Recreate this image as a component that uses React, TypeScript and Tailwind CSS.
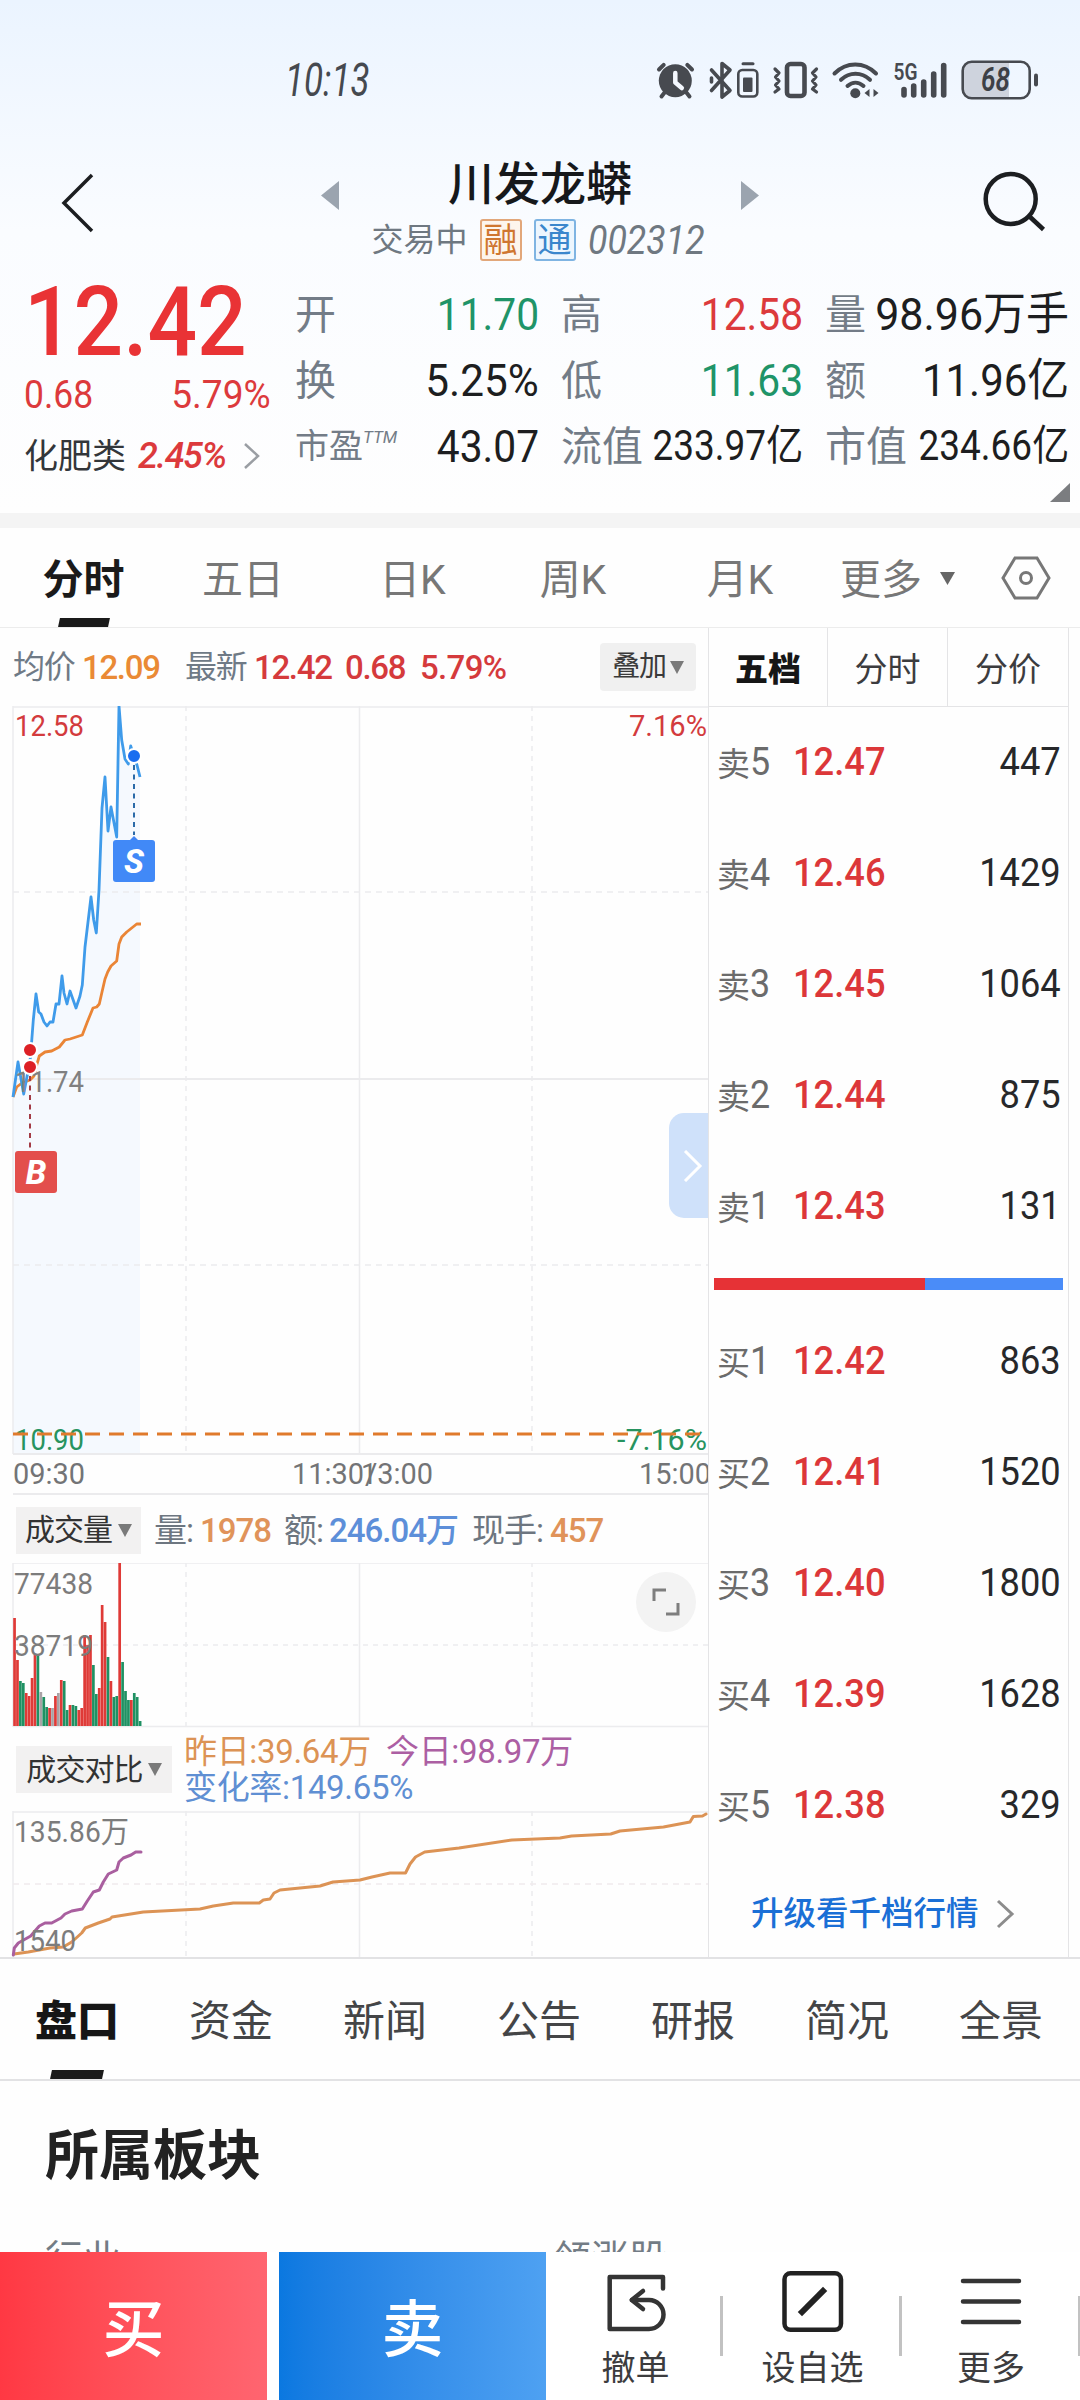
import { useState } from "react";

const FONT = "font-['Roboto','Noto_Sans_CJK_SC',sans-serif]";

const PERIODS = [
  { label: "分时", box: "w-[167px]" },
  { label: "五日", box: "w-[152px]" },
  { label: "日K", box: "w-[187px]" },
  { label: "周K", box: "w-[134px]" },
  { label: "月K", box: "w-[200px]" },
];

const STATS = [
  [
    { label: "开", value: "11.70", style: "text-[45px] scale-x-[0.905] text-[#1f9468]" },
    { label: "高", value: "12.58", style: "text-[45px] scale-x-[0.905] text-[#dc3a3c]" },
    { label: "量", value: "98.96万手", style: "text-[45px] scale-x-[0.955] text-[#1d1e20]" },
  ],
  [
    { label: "换", value: "5.25%", style: "text-[45px] scale-x-[0.94] text-[#1d1e20]" },
    { label: "低", value: "11.63", style: "text-[45px] scale-x-[0.905] text-[#1f9468]" },
    { label: "额", value: "11.96亿", style: "text-[45px] scale-x-[0.93] text-[#1d1e20]" },
  ],
  [
    { label: "市盈", value: "43.07", style: "text-[45px] scale-x-[0.905] text-[#1d1e20]" },
    { label: "流值", value: "233.97亿", style: "text-[42px] scale-x-[0.88] text-[#1d1e20]" },
    { label: "市值", value: "234.66亿", style: "text-[42px] scale-x-[0.88] text-[#1d1e20]" },
  ],
];

const SELLS = [
  ["卖", "5", "12.47", "447"],
  ["卖", "4", "12.46", "1429"],
  ["卖", "3", "12.45", "1064"],
  ["卖", "2", "12.44", "875"],
  ["卖", "1", "12.43", "131"],
];

const BUYS = [
  ["买", "1", "12.42", "863"],
  ["买", "2", "12.41", "1520"],
  ["买", "3", "12.40", "1800"],
  ["买", "4", "12.39", "1628"],
  ["买", "5", "12.38", "329"],
];

const DETAIL_TABS = ["盘口", "资金", "新闻", "公告", "研报", "简况", "全景"];

const PRICE =
  "13,1097 18,1062 23.7,1094 27.5,1074 30.5,1057 31.7,1041 33.3,1020 36,994 38.7,1012 41,1014 44,1022 47,1026 50,1022 53,1022 56,1004 59,1004 62,976 64,993 67,1004 70,991 76,1008 80,996 82.3,985 85,947 91,897 93.7,920 96.3,933 99,890 102,808 105,777 108,831 111,807 116.7,837 119,706 121.7,740 125,759 128.3,764 130.7,746 133.7,756 137,765 140,777";

const AVERAGE =
  "13,1097 16.7,1087 22,1083 30,1080 34,1076 37.3,1063 39.3,1056 45,1052 51.7,1051 59.3,1047 65,1040 70,1039 82.3,1035 87.3,1022 93,1008 96.7,1007 99.3,1004 102,992 105,979 107.7,972 111,966 116.7,961 119,944 121.7,937 126.7,932 136.7,924 141,924";

const TODAY =
  "13.3,1955 14.3,1948 18.3,1943 30.7,1936 35,1931 39.3,1926 45,1923 51.7,1923 61,1918 65,1914 71.7,1911 82.3,1909 87.3,1901 93.3,1892 99.3,1890 103.3,1882 108.3,1874 116.7,1870 119,1862 123.3,1858 131,1855 135.7,1852 141,1852";

const YESTERDAY =
  "14,1954 28.3,1952 50,1948 63.3,1947 71.7,1942 81.7,1933 85.3,1928 98.3,1923 110,1919 112,1917 143.3,1912 200,1909 213.3,1906 233.3,1903 259.3,1903 263.3,1900 270,1899 274,1893 280,1890 320,1886 333,1882 360,1880 372,1877 390,1873 405.5,1873 410,1864 415.5,1857 424.7,1852 459,1848 512,1840 560,1838 571.6,1836 610.7,1834 620,1831 663.5,1827 690,1822 693.3,1816.5 702.5,1816 706,1814";

// r = up, g = down, n = flat
const VOLUMES: [string, number][] = [
  ["r", 108], ["r", 66], ["g", 45], ["g", 43], ["r", 33], ["r", 30], ["r", 48], ["r", 71],
  ["g", 71], ["n", 34], ["g", 29], ["g", 19], ["r", 18], ["n", 18], ["r", 30], ["n", 33],
  ["r", 46], ["g", 45], ["g", 16], ["r", 21], ["g", 21], ["g", 20], ["r", 16], ["r", 18],
  ["r", 91], ["r", 81], ["r", 91], ["g", 61], ["g", 32], ["r", 38], ["r", 121], ["r", 104],
  ["g", 69], ["r", 45], ["g", 29], ["g", 30], ["r", 163], ["g", 64], ["g", 35], ["g", 26],
  ["r", 26], ["g", 33], ["g", 29], ["g", 5],
];

const BAR_COLORS: Record<string, string> = { r: "#df3a37", g: "#1f9163", n: "#a9a3a6" };

function StatusBar() {
  return (
    <div className="h-[160px] flex items-center justify-between pl-[285px] pr-[38px]">
      <span className="text-[46px] leading-none italic text-[#45494f] origin-left scale-x-[0.76]">10:13</span>
      <svg width="390" height="50" viewBox="652 55 390 50" fill="none" stroke="#474a50" strokeLinecap="round" strokeLinejoin="round">
        <circle cx="675.3" cy="80.7" r="16.5" fill="#474a50" stroke="none" />
        <path d="M659 69.5l4.7-4.7M692 69.5l-4.7-4.7M665 92l-3.5 4.5M686 92l3.5 4.5" strokeWidth="4" />
        <path d="M675.3 73v9.5l6.5 5.5" stroke="#f4f8fe" strokeWidth="4.5" />
        <path d="M711.5 70l18.5 20.5-8 6.5V63.5l8 6.5-18.5 20.5M711.5 78v4" strokeWidth="3.6" />
        <rect x="738.3" y="70" width="19" height="26.5" rx="4" strokeWidth="2.6" />
        <path d="M743 63.8h10" strokeWidth="3" />
        <rect x="743" y="77.5" width="9.5" height="14.5" rx="1" fill="#474a50" stroke="none" />
        <rect x="787" y="64" width="17.5" height="32" rx="3.5" strokeWidth="4.6" />
        <path d="M775 69l4 4-3.5 4 3.5 4-3.500 4 3.500 4-4 3M816.500 69l-4 4 3.500 4-3.500 4 3.500 4-3.500 4 4 3" strokeWidth="3.200" />
        <path d="M834.5 73.5c12-12 29.5-12 41.5 0M841 79.8c8.5-8 20.5-8 29 0M847.5 86c5-4.5 11-4.5 16 0" strokeWidth="4" />
        <circle cx="855.3" cy="93.3" r="5" fill="#474a50" stroke="none" />
        <path d="M869.500 89v8l-5-4zM873.500 89v8l5-4z" fill="#474a50" stroke="none" />
        <text x="893.5" y="80" fontSize="24" fontWeight="600" textLength="24" lengthAdjust="spacingAndGlyphs" fill="#474a50" stroke="none">5G</text>
        <path d="M904 89.5V95M913.7 86v9M923.7 82v13M933.7 74v21M943.7 65.5V95" strokeWidth="5.6" />
        <path d="M971 62h38v36h-38q-8-1-8-9V71q0-8 8-9z" fill="#ced3dd" stroke="none" />
        <rect x="962.7" y="61.7" width="67" height="36.6" rx="9" strokeWidth="2.6" />
        <path d="M1036 75.5v9" strokeWidth="4" />
        <text x="981" y="91" fontSize="34" fontWeight="600" fontStyle="italic" textLength="29" lengthAdjust="spacingAndGlyphs" fill="#3d4046" stroke="none">68</text>
      </svg>
    </div>
  );
}

function Header() {
  return (
    <div className="h-[100px] flex items-start">
      <svg className="ml-[60px] mt-[13px]" width="36" height="60" viewBox="0 0 36 60" fill="none" stroke="#1c1e21" strokeWidth="3.5">
        <path d="M32 2L4 30l28 28" />
      </svg>
      <svg className="ml-[225px] mt-[21px]" width="18" height="29" viewBox="0 0 18 29">
        <path d="M18 0v29L0 14.5z" fill="#9ba4af" />
      </svg>
      <div className="w-[402px] flex flex-col items-center">
        <div className="h-[48px] flex items-center text-[46px] leading-none font-medium text-[#16181b]">川发龙蟒</div>
        <div className="h-[64px] flex items-center text-[32px] leading-none text-[#6f7881]">
          <span>交易中</span>
          <span className="ml-[12px] size-[42px] flex items-center justify-center rounded-[3px] border-2 border-[#e2a77a] bg-[#fdf5ed] text-[34px] text-[#cf7630]">融</span>
          <span className="ml-[12px] size-[42px] flex items-center justify-center rounded-[3px] border-2 border-[#7fb4e2] bg-[#edf6fe] text-[34px] text-[#3a86cc]">通</span>
          <span className="ml-[12px] w-[121px] flex">
            <span className="text-[41px] italic font-normal origin-left scale-x-[0.87]">002312</span>
          </span>
        </div>
      </div>
      <svg className="mt-[21px]" width="18" height="29" viewBox="0 0 18 29">
        <path d="M0 0v29l18-14.5z" fill="#9ba4af" />
      </svg>
      <svg className="ml-[223px] mt-[10px]" width="66" height="64" viewBox="982 170 66 64" fill="none" stroke="#1c1e21" strokeWidth="4.5">
        <circle cx="1010.7" cy="199" r="25" />
        <path d="M1029 216l14.5 13.5" />
      </svg>
    </div>
  );
}

function Quote() {
  return (
    <div className="h-[253px] flex">
      <div className="w-[295px] shrink-0 flex flex-col pl-[24px] text-[#dc3a3c]">
        <div className="mt-[12px] h-[100px] flex items-center leading-none text-[#e93335]">
          <span className="text-[97px] font-medium origin-left scale-x-[0.9]">12.42</span>
        </div>
        <div className="h-[46px] w-[247px] flex items-center justify-between text-[39px] leading-none">
          <span className="origin-left scale-x-[0.91]">0.68</span>
          <span className="origin-right scale-x-[0.95]">5.79%</span>
        </div>
        <div className="h-[76px] flex items-center text-[34px] leading-none">
          <span className="text-[#33363a]">化肥类</span>
          <span className="ml-[12px] text-[36px] italic font-medium tracking-[-0.04em]">2.45%</span>
          <svg className="ml-[17px]" width="18" height="26" viewBox="0 0 18 26" fill="none" stroke="#9a9ea3" strokeWidth="2.5">
            <path d="M2 1l13 12L2 25" />
          </svg>
        </div>
      </div>
      <div className="w-[775px] pt-[21px]">
        {STATS.map((row, i) => (
          <div key={i} className="h-[66px] grid grid-cols-[244px_242px_244px] gap-[22px]">
            {row.map((s) => (
              <div key={s.label} className="flex items-center whitespace-nowrap leading-none">
                <span className={s.label === "市盈" ? "flex text-[34px] text-[#737c87]" : "pt-[3px] text-[41px] text-[#737c87]"}>
                  {s.label}
                  {s.label === "市盈" && <span className="text-[17px] italic">TTM</span>}
                </span>
                <div className="flex-1 min-w-0 flex justify-end">
                  <span className={`origin-right ${s.style}`}>{s.value}</span>
                </div>
              </div>
            ))}
          </div>
        ))}
        <svg className="ml-auto mt-[4px]" width="20" height="19" viewBox="0 0 20 19">
          <path d="M20 0v19H0z" fill="#7b7d80" />
        </svg>
      </div>
    </div>
  );
}

function PeriodTabs({ active, onChange }: { active: string; onChange: (v: string) => void }) {
  return (
    <div className="h-[100px] shrink-0 flex border-b border-[#ececec] text-[41px] leading-none text-[#777]">
      {PERIODS.map((p) => (
        <button key={p.label} onClick={() => onChange(p.label)} className={`${p.box} shrink-0 flex flex-col items-center`}>
          <span className={active === p.label ? "h-[90px] pt-[14px] flex items-center font-bold text-[#1a1a1a]" : "h-[90px] pt-[14px] flex items-center"}>
            {p.label}
          </span>
          {active === p.label && <i className="h-[9px] w-[50px] bg-[#1a1a1a] -skew-x-12" />}
        </button>
      ))}
      <button className="h-[99px] pt-[5px] flex items-center">
        更多
        <svg className="ml-[18px] -mt-[4px]" width="15" height="13" viewBox="0 0 15 13">
          <path d="M0 0h15L7.5 13z" fill="#666" />
        </svg>
      </button>
      <svg className="ml-[46px] mt-[28px]" width="50" height="44" viewBox="0 0 50 44" fill="none" stroke="#777" strokeWidth="3">
        <path d="M14 2h22l12 20-12 20H14L2 22z" />
        <circle cx="25" cy="22" r="5.5" />
      </svg>
    </div>
  );
}

function Arrow() {
  return (
    <svg width="14" height="13" viewBox="0 0 14 13">
      <path d="M0 0h14L7 13z" fill="#7a7a7a" />
    </svg>
  );
}

function Grid({ top, bottom }: { top: number; bottom: number }) {
  return (
    <g fill="none" stroke="#ececee" strokeWidth="1.5">
      <path d={`M13 ${top + 1}H708M13 ${top}V${bottom}M359.5 ${top}V${bottom}`} />
      <path d={`M186 ${top}V${bottom}M532 ${top}V${bottom}`} strokeDasharray="5 5" />
    </g>
  );
}

function PriceChart() {
  return (
    <div className="relative h-[789px]">
      <svg width="708" height="789" viewBox="0 706 708 789">
        <polygon points={`${PRICE} 140,1453 13,1453`} fill="#f5f9fe" />
        <Grid top={706} bottom={1454} />
        <path d="M13 1079H708M13 1454H708M13 1494H708" stroke="#ebebed" strokeWidth="2" />
        <path d="M13 892H708M13 1265H708" stroke="#ececee" strokeWidth="1.5" strokeDasharray="6 5" />
        <polyline points={AVERAGE} fill="none" stroke="#ea8536" strokeWidth="2.8" strokeLinejoin="round" />
        <polyline points={PRICE} fill="none" stroke="#3f9bea" strokeWidth="2.8" strokeLinejoin="round" />
        <g fontSize="30">
          <text x="15" y="736" fill="#d33b3d" textLength="69" lengthAdjust="spacingAndGlyphs">12.58</text>
          <text x="629" y="736" fill="#d33b3d" textLength="78" lengthAdjust="spacingAndGlyphs">7.16%</text>
          <text x="15" y="1092" fill="#808080" textLength="69" lengthAdjust="spacingAndGlyphs">11.74</text>
          <text x="15" y="1450" fill="#27935f" textLength="69" lengthAdjust="spacingAndGlyphs">10.90</text>
          <text x="617" y="1450" fill="#27935f" textLength="90" lengthAdjust="spacingAndGlyphs">-7.16%</text>
        </g>
        <path d="M13 1434H702" stroke="#e07a2c" strokeWidth="3" strokeDasharray="15 9" />
        <g fontSize="30" fill="#737476">
          <text x="13" y="1484" textLength="72" lengthAdjust="spacingAndGlyphs">09:30</text>
          <text x="292" y="1484" textLength="72" lengthAdjust="spacingAndGlyphs">11:30</text>
          <text x="365" y="1484">/</text>
          <text x="361" y="1484" textLength="72" lengthAdjust="spacingAndGlyphs">13:00</text>
          <text x="639" y="1484" textLength="72" lengthAdjust="spacingAndGlyphs">15:00</text>
        </g>
        <path d="M134 765v70" stroke="#2a6aa8" strokeWidth="2" strokeDasharray="5 4.5" />
        <path d="M30 1076v75" stroke="#a33a44" strokeWidth="2" strokeDasharray="5 4.5" />
        <g stroke="#fff" strokeWidth="2">
          <circle cx="134" cy="756" r="7" fill="#1a6df0" />
          <circle cx="30" cy="1050" r="7" fill="#dd2025" />
          <circle cx="30" cy="1067" r="7" fill="#dd2025" />
        </g>
        <path d="M129 841l5-5 5 5z" fill="#3f83f3" />
        <rect x="113" y="840" width="42" height="42" rx="3" fill="#4189f7" />
        <rect x="15" y="1151" width="42" height="42" rx="3" fill="#e34f4c" />
        <g fontSize="33" fontWeight="800" fontStyle="italic" fill="#fff" textAnchor="middle">
          <text x="134" y="873">S</text>
          <text x="36" y="1184">B</text>
        </g>
      </svg>
      <button className="absolute right-0 top-[407px] h-[105px] w-[39px] rounded-l-[15px] bg-[#cfe1fa] flex items-center justify-center">
        <svg className="ml-2" width="20" height="32" viewBox="0 0 20 32" fill="none" stroke="#fff" strokeWidth="3">
          <path d="M2 1l15 15L2 31" />
        </svg>
      </button>
    </div>
  );
}

function VolumeChart() {
  return (
    <svg width="708" height="165" viewBox="0 1563 708 165">
      <Grid top={1562} bottom={1727} />
      <path d="M13 1645H708" stroke="#ececee" strokeWidth="1.5" strokeDasharray="5 5" />
      <path d="M13 1726.5H708" stroke="#ececee" strokeWidth="1.5" />
      {VOLUMES.map(([kind, h], i) => (
        <rect key={i} x={13.2 + i * 2.92} y={1726 - h} width="2.7" height={h} fill={BAR_COLORS[kind]} />
      ))}
      <g fontSize="30" fill="#7c7c7c">
        <text x="14" y="1594" textLength="79" lengthAdjust="spacingAndGlyphs">77438</text>
        <text x="14" y="1656" textLength="79" lengthAdjust="spacingAndGlyphs">38719</text>
      </g>
      <circle cx="666" cy="1602" r="30" fill="#f3f3f3" />
      <path d="M654 1601v-11h12M678 1603v11h-12" fill="none" stroke="#7e7e7e" strokeWidth="3" />
    </svg>
  );
}

function CompareChart() {
  return (
    <svg width="708" height="146" viewBox="0 1811 708 146">
      <Grid top={1811} bottom={1957} />
      <path d="M13 1884H708" stroke="#efeaed" strokeWidth="1.5" strokeDasharray="6 5" />
      <g fill="none" strokeWidth="3" strokeLinejoin="round" strokeLinecap="round">
        <polyline points={YESTERDAY} stroke="#dc9355" />
        <polyline points={TODAY} stroke="#a95f9f" />
      </g>
      <g fontSize="30" fill="#7c7c7c">
        <text x="14" y="1842" textLength="115" lengthAdjust="spacingAndGlyphs">135.86万</text>
        <text x="14" y="1951" textLength="62" lengthAdjust="spacingAndGlyphs">1540</text>
      </g>
    </svg>
  );
}

function OrderRows({ rows }: { rows: string[][] }) {
  return (
    <div>
      {rows.map(([side, level, price, volume]) => (
        <div key={side + level} className="h-[111px] flex items-center pl-[8px] pr-[7px] text-[39px] leading-none text-[#6b6b6b]">
          <span className="w-[33px] pt-[3px] text-[33px]">{side}</span>
          <span className="w-[43px]">
            <span className="inline-block origin-left scale-x-[0.92]">{level}</span>
          </span>
          <span className="font-medium origin-left scale-x-[0.93] text-[#dc3739]">{price}</span>
          <span className="ml-auto origin-right scale-x-[0.93] text-[#27282a]">{volume}</span>
        </div>
      ))}
    </div>
  );
}

function OrderBook() {
  return (
    <div className="w-[361px] flex flex-col border-x border-[#e4e4e6]">
      <div className="h-[79px] shrink-0 grid grid-cols-[119px_120px_1fr] divide-x divide-[#e4e4e6] border-b border-[#e4e4e6] text-[33px] leading-none text-[#3c3c3e]">
        <span className="pt-[4px] flex items-center justify-center font-black text-[#161616]">五档</span>
        <span className="pt-[4px] flex items-center justify-center">分时</span>
        <span className="pt-[4px] flex items-center justify-center">分价</span>
      </div>
      <OrderRows rows={SELLS} />
      <div className="mt-[16px] mx-[5px] h-[12px] flex">
        <div className="w-[211px] bg-[#e63236]" />
        <div className="flex-1 bg-[#4a8cf8]" />
      </div>
      <div className="h-[16px]" />
      <OrderRows rows={BUYS} />
      <div className="mt-[28px] h-[50px] flex items-center pl-[42px] text-[32.5px] leading-none font-medium text-[#1a6fd6]">
        升级看千档行情
        <svg className="ml-[17px]" width="20" height="30" viewBox="0 0 20 30" fill="none" stroke="#8c8c8c" strokeWidth="3">
          <path d="M2 2l14 13L2 28" />
        </svg>
      </div>
    </div>
  );
}

function BottomBar() {
  return (
    <div className="h-[148px] shrink-0 flex bg-white text-[34px] leading-none text-[#3c3c3e]">
      <button className="w-[267px] shrink-0 pt-[9px] bg-linear-to-r from-[#ff3843] to-[#ff6570] text-[62px] font-medium text-white">买</button>
      <button className="ml-[12px] w-[267px] shrink-0 pt-[9px] bg-linear-to-r from-[#0a78e0] to-[#4ea1f2] text-[62px] font-medium text-white">卖</button>
      <div className="w-[175px] shrink-0 flex flex-col items-center pt-[19px] pl-[4px]">
        <svg width="64" height="64" viewBox="605 2271 64 64" fill="none" stroke="#343434" strokeWidth="4.5" strokeLinecap="round" strokeLinejoin="round">
          <path d="M664 2288.5v-11.5h-53.3v52h39.3a14.500 14.500 0 0 0 0-29h-17" />
          <path d="M644 2291l-11.300 9 11.300 9" />
        </svg>
        <span className="mt-[16px]">撤单</span>
      </div>
      <i className="mt-[44px] h-[60px] w-[3px] -mx-[1px] shrink-0 bg-[#c2c2c2]" />
      <div className="w-[178px] shrink-0 flex flex-col items-center pt-[19px] pl-[3px]">
        <svg width="62" height="64" viewBox="783 2271 62 64" fill="none" stroke="#222" strokeWidth="4.5">
          <rect x="785.5" y="2273.3" width="56.5" height="56.5" rx="6" />
          <path d="M803 2312l21-21" strokeWidth="6" strokeLinecap="square" />
        </svg>
        <span className="mt-[16px]">设自选</span>
      </div>
      <i className="mt-[44px] h-[60px] w-[3px] -mx-[1px] shrink-0 bg-[#c2c2c2]" />
      <div className="w-[177px] shrink-0 flex flex-col items-center pt-[19px] pl-[3px]">
        <svg width="64" height="64" viewBox="959 2271 64 64" stroke="#343434" strokeWidth="4.5" strokeLinecap="round">
          <path d="M963 2281h56M963 2301.5h56M963 2322h56" />
        </svg>
        <span className="mt-[16px]">更多</span>
      </div>
      <i className="mt-[44px] h-[60px] w-[2px] bg-[#c2c2c2]" />
    </div>
  );
}

export default function App() {
  const [period, setPeriod] = useState("分时");
  const [tab, setTab] = useState("盘口");

  return (
    <div className={`${FONT} w-[1080px] h-[2400px] overflow-hidden flex flex-col bg-[#fefefe]`}>
      <div className="h-[513px] shrink-0 bg-linear-to-b from-[#ebf4ff] via-[#fafcff] via-45% to-[#fefefe]">
        <StatusBar />
        <Header />
        <Quote />
      </div>
      <div className="h-[15px] shrink-0 bg-[#f4f4f4]" />
      <PeriodTabs active={period} onChange={setPeriod} />

      <div className="h-[1329px] shrink-0 flex">
        <div className="w-[708px] overflow-hidden">
          <div className="h-[78px] flex items-center pl-[13px] text-[33px] leading-none tracking-[-0.04em] font-medium text-[#d53a3c]">
            <span className="w-[69px] text-[32px] font-normal text-[#6f7a86]">均价</span>
            <span className="w-[103px] text-[#ea8a35]">12.09</span>
            <span className="w-[69px] text-[32px] font-normal text-[#6f7a86]">最新</span>
            <span className="w-[91px]">12.42</span>
            <span className="w-[75px]">0.68</span>
            <span className="tracking-[-0.02em]">5.79%</span>
            <button className="ml-auto mr-[12px] h-[48px] w-[96px] flex items-center justify-center gap-[4px] rounded-[4px] bg-[#f0f0f0] text-[28px] font-normal text-[#3a3a3a]">
              叠加
              <Arrow />
            </button>
          </div>
          <PriceChart />
          <div className="h-[68px] pt-[2px] flex items-center pl-[16px] text-[33px] leading-none tracking-[-0.03em] text-[#6d7680]">
            <button className="h-[47px] w-[125px] flex items-center justify-center gap-[6px] bg-[#f2f1f1] text-[30px] text-[#333]">
              成交量
              <Arrow />
            </button>
            <span className="ml-[13px] w-[46px]">量:</span>
            <span className="w-[84px] font-medium text-[#e0935a]">1978</span>
            <span className="w-[45px]">额:</span>
            <span className="w-[143px] font-medium text-[#5d8fd9]">246.04万</span>
            <span className="w-[78px]">现手:</span>
            <span className="font-medium text-[#e0935a]">457</span>
          </div>
          <VolumeChart />
          <div className="h-[83px] flex items-center pl-[16px] text-[33px] leading-none tracking-[-0.01em]">
            <button className="h-[47px] w-[156px] flex items-center justify-center gap-[5px] bg-[#f2f1f1] text-[30px] tracking-[-0.03em] text-[#333]">
              成交对比
              <Arrow />
            </button>
            <div className="ml-[12px] flex flex-col gap-[3px]">
              <div className="flex">
                <span className="w-[202px] text-[#dc9355]">昨日:39.64万</span>
                <span className="text-[#ac5fa3]">今日:98.97万</span>
              </div>
              <span className="text-[#5f8fd3]">变化率:149.65%</span>
            </div>
          </div>
          <CompareChart />
        </div>
        <OrderBook />
      </div>

      <div className="h-[124px] shrink-0 flex border-y-2 border-[#e2e2e4] text-[42px] leading-none text-[#444547]">
        {DETAIL_TABS.map((t) => (
          <button key={t} onClick={() => setTab(t)} className="w-[154px] shrink-0 flex flex-col items-center">
            <span className={tab === t ? "h-[111px] pt-[14px] flex items-center font-black text-[#161616]" : "h-[111px] pt-[14px] flex items-center"}>{t}</span>
            {tab === t && <i className="h-[9px] w-[52px] bg-[#1a1a1a] -skew-x-12" />}
          </button>
        ))}
      </div>

      <div className="h-[171px] shrink-0 overflow-hidden px-[45px] pt-[49px]">
        <h2 className="text-[54px] leading-none font-bold text-[#222]">所属板块</h2>
        <div className="mt-[56px] flex text-[38px] leading-none text-[#737c85]">
          <span className="w-[508px]">行业</span>
          <span>领涨股</span>
        </div>
      </div>
      <BottomBar />
    </div>
  );
}
